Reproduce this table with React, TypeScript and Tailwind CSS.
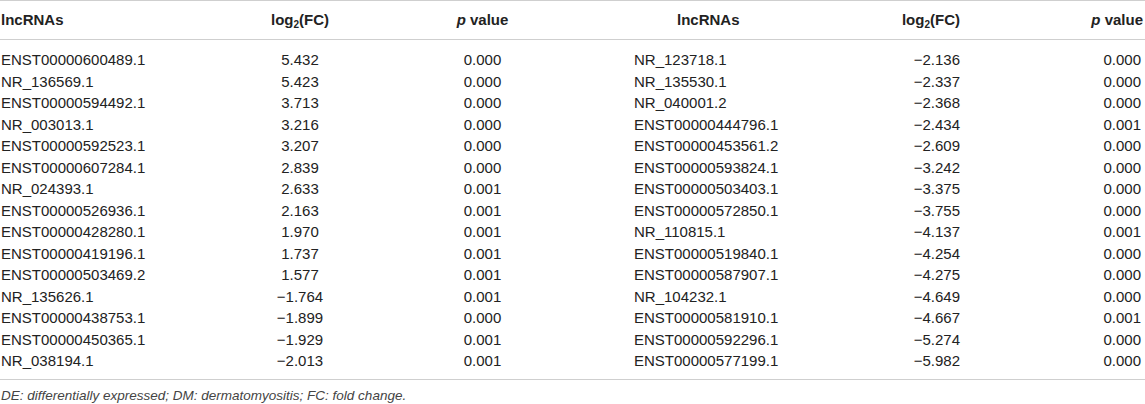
const left: [string, string, string][] = [
  ["ENST00000600489.1", "5.432", "0.000"],
  ["NR_136569.1", "5.423", "0.000"],
  ["ENST00000594492.1", "3.713", "0.000"],
  ["NR_003013.1", "3.216", "0.000"],
  ["ENST00000592523.1", "3.207", "0.000"],
  ["ENST00000607284.1", "2.839", "0.000"],
  ["NR_024393.1", "2.633", "0.001"],
  ["ENST00000526936.1", "2.163", "0.001"],
  ["ENST00000428280.1", "1.970", "0.001"],
  ["ENST00000419196.1", "1.737", "0.001"],
  ["ENST00000503469.2", "1.577", "0.001"],
  ["NR_135626.1", "−1.764", "0.001"],
  ["ENST00000438753.1", "−1.899", "0.000"],
  ["ENST00000450365.1", "−1.929", "0.001"],
  ["NR_038194.1", "−2.013", "0.001"],
];

const right: [string, string, string][] = [
  ["NR_123718.1", "−2.136", "0.000"],
  ["NR_135530.1", "−2.337", "0.000"],
  ["NR_040001.2", "−2.368", "0.000"],
  ["ENST00000444796.1", "−2.434", "0.001"],
  ["ENST00000453561.2", "−2.609", "0.000"],
  ["ENST00000593824.1", "−3.242", "0.000"],
  ["ENST00000503403.1", "−3.375", "0.000"],
  ["ENST00000572850.1", "−3.755", "0.000"],
  ["NR_110815.1", "−4.137", "0.001"],
  ["ENST00000519840.1", "−4.254", "0.000"],
  ["ENST00000587907.1", "−4.275", "0.000"],
  ["NR_104232.1", "−4.649", "0.000"],
  ["ENST00000581910.1", "−4.667", "0.001"],
  ["ENST00000592296.1", "−5.274", "0.000"],
  ["ENST00000577199.1", "−5.982", "0.000"],
];

const cols = "grid grid-cols-[200px_200px_234px_150px_306px_1fr]";

function Log2() {
  return (
    <span>
      log<sub className="text-[10px] align-baseline relative top-[3px]">2</sub>(FC)
    </span>
  );
}

function PValue() {
  return (
    <span>
      <i>p</i> value
    </span>
  );
}

export default function App() {
  return (
    <div
      className="w-[1145px] h-[404px] bg-white text-[#222] text-[15px]"
      style={{ fontFamily: '"Liberation Sans", Arial, sans-serif' }}
    >
      {/* header */}
      <div className={`${cols} h-[40px] items-center border-t border-b border-[#cfcfcf] font-bold`}>
        <div className="pl-[1px]">lncRNAs</div>
        <div className="text-center">
          <Log2 />
        </div>
        <div className="text-center pr-[69px]">
          <PValue />
        </div>
        <div className="pl-[43px]">lncRNAs</div>
        <div className="text-right pr-[130px]">
          <Log2 />
        </div>
        <div className="text-right pr-[2px]">
          <PValue />
        </div>
      </div>

      {/* body */}
      <div className="pt-[9px] pb-[7px] border-b border-[#cfcfcf]">
        {left.map((l, i) => {
          const r = right[i];
          return (
            <div key={l[0]} className={`${cols} h-[21.5px] items-center leading-[21px]`}>
              <div className="pl-[1px]">{l[0]}</div>
              <div className="text-center">{l[1]}</div>
              <div className="text-center pr-[69px]">{l[2]}</div>
              <div>{r[0]}</div>
              <div className="text-right pr-[130px]">{r[1]}</div>
              <div className="text-right pr-[4px]">{r[2]}</div>
            </div>
          );
        })}
      </div>

      {/* note */}
      <p className="mt-[8px] pl-[1px] italic text-[13.5px] leading-[16px] text-[#444]">
        DE: differentially expressed; DM: dermatomyositis; FC: fold change.
      </p>
    </div>
  );
}
